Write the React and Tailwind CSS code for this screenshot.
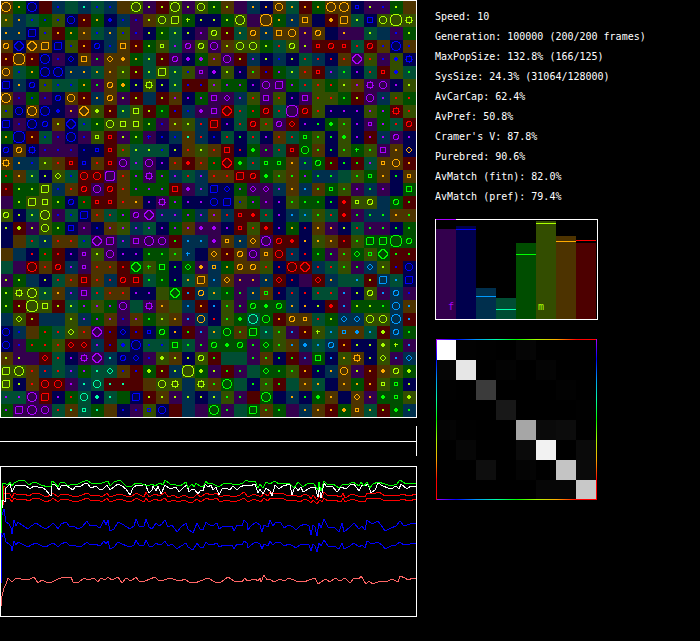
import React from 'react';

const HUES = {
  p: { bright: '#aa00ff', dark: '#33004d' },
  b: { bright: '#0000ff', dark: '#00004d' },
  s: { bright: '#0099ff', dark: '#002f4d' },
  t: { bright: '#00ffaa', dark: '#004d33' },
  g: { bright: '#00ff00', dark: '#004d00' },
  l: { bright: '#aaff00', dark: '#334d00' },
  o: { bright: '#ffaa00', dark: '#4d3300' },
  r: { bright: '#ff0000', dark: '#4d0000' },
};
const ORDER = ['p', 'b', 's', 't', 'g', 'l', 'o', 'r'];

// one token per cell: background hue, marker hue, marker shape
const WORLD = [
  'oOQ gO. bBQ r_ sB. t_ sT. tB. sB. o_ lLQ pL. rL. lLQ pL. lLC gL. oL. p_ sO. bO. oOC tO. rO. gO. oOQ oOQ bBs pL. pB. gL. o_',
  'lO. sO. tB. gB. lB. bBC rO. gO. bB+ sB. pB. oL. lLC lLR gLt bL. bL. gL. lLQ p_ oOX gO. sO. oOS b_ rO+ oOR tL. bBS lLC lLX lL*',
  'sO. sO. bBR lB. rO. gO. oO. tB. sO. lB. pB. bL. gL. tL. bL. pP. lLc rL. tO. oOc sO. oOS oOC pO. oOc b_ pO. p_ tL. s_ pB. gL.',
  'oOc bBD oOD oOR bBR lB. rO. bBc sB. oOS rO. gL. lLs tP. pPc lLc pPC oL. lLC lLC gL. tR. lLc pL. rRs rRc rRs tR. rRc oB. bBQ oB.',
  'rO. oOX rO. bBQ pB. bBd oOS pG. oOd oO+ gO. tL. rL. pPc bP+ gP+ oP. pPC rL. sP. bL. sB. bL. tR. sR. bR. oR. pPD lR. pB. lB+ bB*',
  'oOC tB. gO. bBQ bBQ sO. sO. tO. oO. lL. rL. tL. lLR tL. lB. pPs bP+ lL. bP. oG. rB. gP. tL. oR. rRs sP. tG. bP. tR. rRs lB+ tG.',
  'bBR sO. bBc lB. tB. tB. gO. pG. oOc gO+ bL. lL* bL. tL. rB. rB. lP. gP. gP. bP. pPC pPR gP. tR. lR. gR. lL. oP. pP* pPC bP. lL.',
  'oOQ pB. gB. pB. bBc oOC rO. sO. oOc pL. rL. s_ rL. oP. bP. gP. pPS pPd sP. lR. pPS lR. bP. pPS lR. lR. gG. rL. pPC sP. lR. gR.',
  'lB. bBC oOQ bBQ bB+ pO. oOD lL+ rO. tL. lLS rL. gG. rB. sB. pP+ pPS rRD tR. gR. rRc tR. pPX rRc lR. bP. bP. bP. lP. gP. rR* lR.',
  'bBR pB. bBQ bBc oL. bBD tB. gL. lLC lLS lLS gL. pB. oL. lL. sR. rRR bP. tR. rRc lR. pPc rRd bP. bG. gG+ lG. bP. pPs gP. tR. rRc',
  'gO. bBX rO. tB. pB. bBQ pB. lLs rRs pL. gL. pBt bB. sB. oT. sR. bB. tR. bG. tR. bP. oR. tR. gGs lG. bG. lG+ bP. rP. sP. pPc bP.',
  'bBc oOc bB* pB. pB. pB. bB. bBs rRs lR. tL. tL. tB. bL. oR. lL. oR. rRS bR. gG+ pG. tR. rRs gGC oG. bG. lG. gGt lG. pPS oO. bOd',
  'oO* sO. sB. lL. oR. rRs bBs oR. rRs pPC tP. pPC bP. oR. rR+ oR. gR. rRD gG+ tR. gGs gGs oO. sG. gGc rG. bG. rG. tP. oOs oOC rO.',
  'gR. oO. tL. bL. lLd tB. rRC rRC pPZ oR. gP. pP* gP. sP. tR. sP. oR. oR. rRR rRc gG+ lG. oG. gP. sG. sG. t_ lG. gGs oO. bG. oOs',
  'rR. gL. gL. lLR sB. oR. rRc pPC rRc oR. gP. gP. gP. rRS pP+ sP. bBR bBd gP. pPd pPd sP. oO. sS. oG. gGs lG. pP. sG. pP. b_ gGS',
  'p_ gL. lLR lLS gL. bBc gR. rRs rRs oR. oO. bP. pP* gP. bP. bP. bBC bBR lB. gP. pP. bP. lG. gG. gG. bG. rR+ lLs lLc s_ gGc rG.',
  'lLc bL. tL. lLQ pB. tB. bBR oR. tR. gP. pPc pPD sP. sP. gP. sP. oP. sR. rRs rR+ tR. bP. sS. tS. lG. tR. rR+ pG. sG. sG. oO. oG.',
  'bL. rL+ pL. lLC gL. bBS pP. bB. oP. lP. sP. tP. bP. gP. oP. pP+ pP+ bP. rRs lR. rR+ bP. gO. bR. oO. pO. bL. tR. pG. pG. bG. gG.',
  'b_ o_ tR. sL. oR. oR. tB. pPD pPR sP. pPS pPQ pPC rG. sS. sS. pP+ oOs sO. oOd pPQ rRc rR+ bO. lO. oO. rR. lG. gGR gGR gGX gGc',
  'o_ s_ bR. gR. rR. bP. pPs lL. pPC bP. bP. gG. gG. lG. sSt b_ oOd rO. oOc pPC oOs rRC sR. bR. gG. pG. oG. gGd lGs gGD rG. rG.',
  't_ p_ rRQ oR. rRc sP. pPs oR. oR. rR. gGD lGt gGS bG. gGd pO+ sOs gO. oOc oOc lR. bR. rRQ rRD sR. tR. lG. pG. sSd lL. rB. bBC',
  'pL. gL. s_ bL. tR. oR. rRS oR. sR. rRc rRS tG. gG. bG. tO. oOR sS. oOd pO. pO. sO. rRd bR. p_ rRd sO. t_ tS. rL. sSR tS. bBR',
  'gL. lL* lLQ tL. oO. sP. pPS tR. oR. oR. bP. bP. l_ gGD rS. sOc tO. gG. pG. sO. oGs bR. sR. bR. tR. tR. pS. bL. lLc pS. sSc pB.',
  'gL. rL. lLX lLS rL. tL. gP. lP. gP. pPC t_ pP* oO. l_ sS. rO. bS. lG. pG. gGc gG+ gGc sO. bO. bL. rR+ pS. gL. gL. gG. sSC oS.',
  's_ lLd rL. s_ s_ lL. sP. gP. oP. pB. oP. gG. lL. oO. pS. sOC bR. lG. gG+ tTQ gGC rO. oOc oOs tR. gL. sSd sSd lLC lLC sSQ rS.',
  'bBC sB. o_ gR. tR. lLd oR. pPD rB. bBd rB. bBs gGc bO. rG. pS. tO. gGC oG. gGR tT. lG. pS. rO. lLt tS. oSs oS+ tS. rL+ sSc gG.',
  'bBC pB. gR. gR. lR. rRd rRd sP. rB. tB+ bBQ tB. tB. gGS tG. pG. gGc gG+ gGc pG. gGd lG. oS. sS+ tS. sSc rO. bL. bL. lL+ gLt pS.',
  'oL. pL. p_ rRd tR. bP. pP* pPD sT. bBc bBd pB. lL+ oL. bL. lLc rG. t_ t_ pG. oG. bG. rG. pS. gGS bS. lO. oO* bL. lLd pS. sSd',
  'lLR lLQ oR. sR. tR. sP. gP. tT. tTd oB. rB. gL+ rL. sL. lLX gL+ pL. rG. pG. t_ gGd gG. lG. rO. bG. sO. oOC pL. rO. oO+ lLc gL+',
  'lLR bL. oR. rRC rRC pP. sT. tTC rT. rT. r_ o_ lLC lL* s_ lL* oG. gGQ t_ bG. lG. rG. t_ oO. tO. b_ oO. gO. rO. lLs gGs bL.',
  'tP. tP. pPQ rRR bP. gR. tTC bT+ tT. g_ bBR rL. oL. pL. sL. bL. sL. lG. pG. r_ gGQ b_ sO. bG. gG+ oO. b_ oOd pO. gG+ gGs lL+',
  'gP. pPR pPQ pPC tR. oT. tTs gT. o_ bB. pB. lBs bBC r_ s_ p_ gGQ pG. t_ gGR oG. gG. p_ sO. oO. rO. gO+ oOs tO. rL. gG+ sG.',
].map((row) => row.split(' '));

const CELL = 13;

const STATS = [
  'Speed: 10',
  'Generation: 100000 (200/200 frames)',
  'MaxPopSize: 132.8% (166/125)',
  'SysSize: 24.3% (31064/128000)',
  'AvCarCap: 62.4%',
  'AvPref: 50.8%',
  "Cramer's V: 87.8%",
  'Purebred: 90.6%',
  'AvMatch (fitn): 82.0%',
  'AvMatch (pref): 79.4%',
];

// distance from the top of the frame: filled bar, marker line
const BARS = [
  { hue: 'p', top: 10, mark: 0 },
  { hue: 'b', top: 7, mark: 10 },
  { hue: 's', top: 69, mark: 77 },
  { hue: 't', top: 79, mark: 90 },
  { hue: 'g', top: 24, mark: 35 },
  { hue: 'l', top: 2, mark: 4 },
  { hue: 'o', top: 17, mark: 22 },
  { hue: 'r', top: 24, mark: 21 },
];

const MATRIX = [
  [255, 2, 1, 0, 5, 0, 0, 0],
  [5, 230, 0, 3, 0, 4, 0, 0],
  [1, 0, 59, 0, 0, 0, 2, 0],
  [0, 0, 0, 24, 0, 0, 0, 1],
  [4, 1, 0, 0, 166, 10, 12, 0],
  [0, 6, 0, 0, 10, 242, 0, 10],
  [0, 0, 14, 0, 4, 0, 196, 10],
  [0, 0, 0, 0, 0, 6, 6, 200],
];

const GREEN = '1,68 2,34 2,17 6,18 8,19 10,16 12,20 14,17 20,14 25,15 29,19 34,16 37,17 41,19 48,21 51,20 52,15 55,17 58,21 60,17 64,16 68,20 72,18 76,19 80,17 87,14 92,18 97,17 102,17 108,15 110,20 114,16 120,14 126,20 132,20 136,17 142,18 148,20 152,18 155,20 160,17 163,19 165,14 170,18 176,19 180,20 186,16 188,22 192,18 194,21 196,17 200,20 203,21 206,15 208,18 211,17 213,18 219,21 224,17 230,17 234,19 240,18 243,17 246,14 250,16 255,15 258,22 260,18 263,22 266,16 270,18 275,15 279,18 283,17 290,18 294,22 298,16 303,21 308,17 314,18 318,24 319,16 321,25 324,15 327,18 333,18 339,22 342,19 349,18 353,16 359,20 361,16 364,20 367,16 370,22 373,18 378,16 385,18 391,20 397,18 400,14 406,18 416,17';
const WHITE = '2,42 3,34 5,36 6,22 8,20 10,17 12,26 15,20 18,19 21,20 25,19 30,23 34,20 38,21 43,22 46,24 49,28 51,30 52,18 55,18 59,24 61,20 66,19 70,22 73,24 76,20 80,21 84,18 87,17 91,22 96,20 100,24 103,23 107,19 110,24 114,21 118,18 122,20 126,23 130,29 133,22 137,19 141,20 145,18 149,27 152,24 153,20 156,25 158,20 161,28 165,19 170,23 176,21 179,26 183,22 187,19 189,26 192,23 195,24 198,28 201,24 203,25 205,18 208,21 211,19 213,24 216,21 219,29 222,23 226,22 230,24 233,20 237,24 240,21 245,19 250,20 255,18 258,27 260,23 263,28 266,22 270,25 272,30 275,19 279,23 283,20 290,18 292,29 295,20 298,25 301,21 303,26 310,22 315,21 318,31 319,20 321,32 324,17 327,21 332,20 337,26 341,21 346,23 351,18 354,18 359,25 362,19 365,20 368,18 371,27 375,24 378,17 383,20 388,22 391,23 396,20 399,23 401,18 407,23 411,20 416,20';
const RED = '3,35 4,20 5,21 6,27 10,28 12,32 14,27 18,29 24,28 29,30 34,27 40,28 46,31 51,29 53,27 58,31 61,28 66,28 72,30 76,31 82,29 87,27 92,30 98,29 102,31 107,27 110,31 116,29 120,28 126,30 131,31 136,27 140,29 144,31 146,26 149,31 155,28 160,30 165,26 168,31 174,29 178,32 184,29 188,31 193,32 197,28 201,31 206,27 211,29 217,27 220,31 226,29 234,31 240,29 244,26 248,31 254,28 261,31 264,27 268,30 270,26 276,28 282,27 288,30 294,29 300,31 305,28 309,30 311,33 313,29 317,34 320,29 322,32 324,26 328,30 334,29 341,31 343,27 345,32 352,28 358,30 365,31 367,27 373,28 379,26 385,30 391,29 398,30 402,28 409,30 416,28';
const BLUE = '1,115 2,49 4,43 5,50 6,56 9,58 11,62 12,68 14,54 16,60 18,56 22,59 28,63 31,60 36,57 42,61 46,63 51,59 53,57 56,60 58,63 61,58 66,56 70,61 74,60 78,63 82,61 87,55 90,60 95,59 100,62 104,54 106,59 108,54 110,65 114,63 118,56 122,58 127,61 130,63 134,60 136,53 139,60 144,60 146,53 149,61 152,63 156,57 159,60 162,58 165,54 168,61 172,59 177,66 181,61 186,57 188,63 193,67 197,57 200,63 203,64 206,56 208,58 212,60 217,57 219,63 224,60 232,60 234,65 237,59 242,60 244,54 247,57 248,64 251,60 256,56 260,59 262,66 264,59 268,61 270,54 273,60 276,56 281,57 284,62 289,59 293,61 296,64 300,60 305,58 309,60 311,69 313,59 315,61 317,70 319,57 321,62 324,53 328,61 334,61 339,66 342,57 344,66 350,61 354,57 359,63 362,60 365,64 367,54 372,58 378,55 383,62 385,65 391,62 396,60 400,55 404,60 410,58 416,57';
const PINK = '1,140 2,130 4,122 6,118 8,112 12,116 15,113 18,112 24,114 30,113 34,111 38,117 42,114 46,116 52,116 58,113 64,111 71,111 73,116 79,116 84,112 88,114 94,112 98,116 101,112 105,114 108,111 112,114 118,111 122,117 126,112 131,115 136,111 139,115 145,115 150,113 155,111 158,114 164,114 170,112 176,114 180,115 185,113 189,116 195,117 200,115 208,112 215,116 221,116 228,111 234,115 242,116 245,112 247,115 255,113 258,115 260,112 261,116 264,109 267,114 270,113 274,116 280,113 284,115 289,112 296,115 304,116 309,114 315,112 318,118 321,116 326,113 330,116 335,112 340,115 345,112 350,117 354,112 359,113 361,110 366,118 369,115 373,118 380,115 388,115 392,113 398,116 400,110 405,112 408,114 413,112 416,113';

// the second trace of a pair: same wobble, other base line and gain
const follow = (points, base, to, gain) =>
  points
    .split(' ')
    .map((pt) => {
      const [x, y] = pt.split(',').map(Number);
      return `${x},${Math.round(to + (y - base) * gain)}`;
    })
    .join(' ');

const SERIES = [
  { color: '#ff6666', points: PINK },
  { color: '#0000ff', points: BLUE },
  { color: '#0000ff', points: follow(BLUE, 60, 79, 0.7) },
  { color: '#ff0000', points: RED },
  { color: '#ff0000', points: follow(RED, 29, 34, 0.8) },
  { color: '#ffffff', points: WHITE },
  { color: '#00ff00', points: GREEN },
];

const RADIUS = { c: 2.5, C: 3.5, Q: 4.5, X: 6 };

function Marker({ x, y, shape, color }) {
  const line = { fill: 'none', stroke: color };
  switch (shape) {
    case '.':
      return <rect x={x - 1} y={y - 1} width="2" height="2" fill={color} />;
    case '+':
      return <path d={`M${x - 1} ${y - 2}h2v1h1v2h-1v1h-2v-1h-1v-2h1z`} fill={color} />;
    case 't':
      return <path d={`M${x - 2} ${y - 0.5}h4M${x - 0.5} ${y - 2}v4`} {...line} />;
    case 's':
      return <rect x={x - 1.5} y={y - 1.5} width="3" height="3" {...line} />;
    case 'S':
      return <rect x={x - 2.5} y={y - 2.5} width="5" height="5" {...line} />;
    case 'R':
      return <rect x={x - 3.5} y={y - 3.5} width="7" height="7" rx="1.5" {...line} />;
    case 'Z':
      return <rect x={x - 4.5} y={y - 4.5} width="9" height="9" rx="2.5" {...line} />;
    case 'd':
      return <path d={`M${x} ${y - 3}l3 3l-3 3l-3 -3z`} {...line} />;
    case 'D':
      return <path d={`M${x - 1} ${y - 4.5}h2l3.5 3.5v2l-3.5 3.5h-2l-3.5 -3.5v-2z`} {...line} />;
    case '*':
      return (
        <path
          d={`M${x - 2.5} ${y - 2.5}h5v5h-5zM${x} ${y - 4}v1M${x} ${y + 3}v1M${x - 4} ${y}h1M${x + 3} ${y}h1`}
          {...line}
        />
      );
    default:
      return <circle cx={x} cy={y} r={RADIUS[shape]} {...line} />;
  }
}

function World() {
  return (
    <svg viewBox="0 0 417 418" className="block w-full" shapeRendering="crispEdges" role="img" aria-label="World grid">
      {WORLD.map((row, j) =>
        row.map((cell, i) => (
          <rect key={`${i}-${j}`} x={i * CELL} y={1 + j * CELL} width={CELL} height={CELL} fill={HUES[cell[0]].dark} />
        ))
      )}
      {WORLD.map((row, j) =>
        row.map((cell, i) =>
          cell[1] === '_' ? null : (
            <Marker
              key={`${i}-${j}`}
              x={i * CELL + 6}
              y={j * CELL + 7}
              shape={cell[2]}
              color={HUES[cell[1].toLowerCase()].bright}
            />
          )
        )
      )}
      <rect x="0.5" y="0.5" width="416" height="417" fill="none" stroke="#fff" />
    </svg>
  );
}

function Timeline() {
  return (
    <svg viewBox="0 0 417 30" className="block w-full" shapeRendering="crispEdges" aria-hidden="true">
      <path d="M0 15.5H417M416.5 0V30" stroke="#fff" />
    </svg>
  );
}

function History() {
  return (
    <svg viewBox="0 0 417 151" className="block w-full" shapeRendering="crispEdges" role="img" aria-label="History">
      <rect x="0.5" y="0.5" width="416" height="150" fill="none" stroke="#fff" />
      {SERIES.map((s, i) => (
        <polyline key={i} points={s.points} fill="none" stroke={s.color} />
      ))}
    </svg>
  );
}

function TraitBars() {
  return (
    <svg
      viewBox="0 0 163 101"
      className="block w-[163px] font-['DejaVu_Sans_Mono',monospace] text-[10px]"
      shapeRendering="crispEdges"
      role="img"
      aria-label="Trait sizes"
    >
      <rect x="0.5" y="0.5" width="162" height="100" fill="none" stroke="#fff" />
      {BARS.map((bar, i) => (
        <g key={bar.hue}>
          <rect x={1 + i * 20} y={bar.top} width="20" height={100 - bar.top} fill={HUES[bar.hue].dark} />
          <rect x={1 + i * 20} y={bar.mark} width="20" height="1" fill={HUES[bar.hue].bright} />
        </g>
      ))}
      <text x="13" y="91" fill={HUES.p.bright}>f</text>
      <text x="103" y="91" fill={HUES.l.bright}>m</text>
    </svg>
  );
}

function MatchMatrix() {
  const stops = ORDER.map((hue, i) => <stop key={hue} offset={i / 8} stopColor={HUES[hue].bright} />);
  return (
    <svg viewBox="0 0 163 161" className="block w-[163px]" shapeRendering="crispEdges" role="img" aria-label="Match matrix">
      <defs>
        <linearGradient id="across">{stops}</linearGradient>
        <linearGradient id="down" x2="0" y2="1">{stops}</linearGradient>
      </defs>
      {MATRIX.map((row, j) =>
        row.map((v, i) => (
          <rect key={`${i}-${j}`} x={1 + i * 20} y={1 + j * 20} width="20" height="20" fill={`rgb(${v},${v},${v})`} />
        ))
      )}
      <rect x="1" y="0" width="161" height="1" fill="url(#across)" />
      <rect x="1" y="160" width="161" height="1" fill="url(#across)" />
      <rect x="1" y="0" width="1" height="161" fill="url(#down)" />
      <rect x="161" y="0" width="1" height="161" fill="url(#down)" />
    </svg>
  );
}

export default function App() {
  return (
    <main className="flex min-h-screen items-start gap-[18px] bg-black text-white">
      <div className="flex w-[417px] shrink-0 flex-col">
        <World />
        <div className="py-2">
          <Timeline />
        </div>
        <div className="pt-0.5">
          <History />
        </div>
      </div>
      <div className="flex min-w-0 flex-1 flex-col pt-[7px]">
        <ul className="font-['DejaVu_Sans_Mono',monospace] text-[10px] leading-5 whitespace-nowrap">
          {STATS.map((line) => (
            <li key={line}>{line}</li>
          ))}
        </ul>
        <div className="flex flex-col gap-[19px] pt-3">
          <TraitBars />
          <MatchMatrix />
        </div>
      </div>
    </main>
  );
}
